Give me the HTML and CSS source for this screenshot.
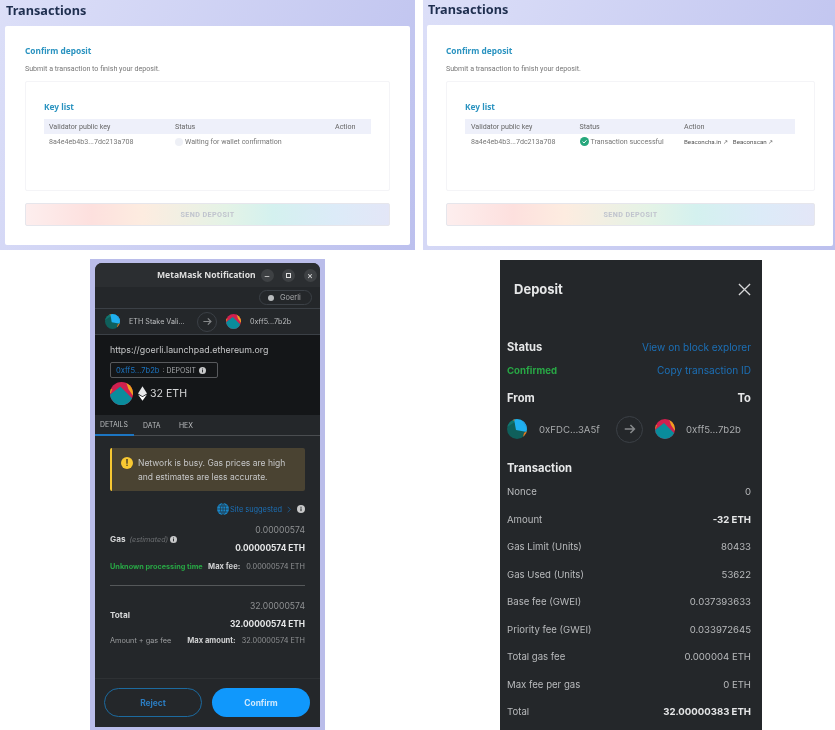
FILE: index.html
```html
<!DOCTYPE html>
<html lang="en">
<head>
  <meta charset="UTF-8">
  <title>Transactions</title>
  <link rel="stylesheet" href="styles.css">
</head>
<body>
  <svg class="defs" width="0" height="0">
    <symbol id="fox1" viewBox="0 0 20 20">
      <clipPath id="c1"><circle cx="10" cy="10" r="10"/></clipPath>
      <g clip-path="url(#c1)">
        <rect width="20" height="20" fill="#0f5f5b"/>
        <path d="M0 0H9L8 3L0 8Z" fill="#12756f"/>
        <path d="M7 0H16L20 6V13L9 11Z" fill="#1fb0f0"/>
        <path d="M14 0H20V10Z" fill="#2a9be0"/>
        <path d="M17 14L20 12V17L16 18Z" fill="#e8761c"/>
        <path d="M5 0H8L7 2Z" fill="#d8701c"/>
      </g>
    </symbol>
    <symbol id="fox2" viewBox="0 0 20 20">
      <clipPath id="c2"><circle cx="10" cy="10" r="10"/></clipPath>
      <g clip-path="url(#c2)">
        <rect width="20" height="20" fill="#d0204f"/>
        <path d="M14 0H20V12L16 6Z" fill="#f0a21e"/>
        <path d="M0 6H2L1 9L0 10Z" fill="#e88a1e"/>
        <path d="M0 11L9 4L20 15V20H0Z" fill="#0a8c9c"/>
      </g>
    </symbol>
    <symbol id="info" viewBox="0 0 12 12">
      <circle cx="6" cy="6" r="6" fill="currentColor"/>
      <rect x="5.2" y="5" width="1.6" height="4.2" fill="#24272a"/>
      <rect x="5.2" y="2.6" width="1.6" height="1.6" fill="#24272a"/>
    </symbol>
    <symbol id="arrow" viewBox="0 0 16 16">
      <path d="M2 8H13M8.5 3.5L13 8L8.5 12.5" fill="none" stroke="currentColor" stroke-width="1.8"/>
    </symbol>
  </svg>

  <div class="top-row">
    <section class="panel panel-wait">
      <h1>Transactions</h1>
      <div class="card">
        <h2>Confirm deposit</h2>
        <p class="sub">Submit a transaction to finish your deposit.</p>
        <div class="inner">
          <h3>Key list</h3>
          <div class="thead wait-cols">
            <span>Validator public key</span><span>Status</span><span>Action</span>
          </div>
          <div class="tbody wait-cols">
            <span>8a4e4eb4b3...7dc213a708</span>
            <span class="status"><i class="spinner"></i>Waiting for wallet confirmation</span>
          </div>
        </div>
        <div class="send">SEND DEPOSIT</div>
      </div>
    </section>

    <section class="panel panel-done">
      <h1>Transactions</h1>
      <div class="card">
        <h2>Confirm deposit</h2>
        <p class="sub">Submit a transaction to finish your deposit.</p>
        <div class="inner">
          <h3>Key list</h3>
          <div class="thead done-cols">
            <span>Validator public key</span><span>Status</span><span>Action</span>
          </div>
          <div class="tbody done-cols">
            <span>8a4e4eb4b3...7dc213a708</span>
            <span class="status">
              <svg class="check" viewBox="0 0 12 12"><circle cx="6" cy="6" r="6" fill="#26a77c"/><path d="M3.4 6.2L5.3 8L8.7 4.4" fill="none" stroke="#fff" stroke-width="1.3"/></svg>
              Transaction successful
            </span>
            <span class="links"><a>Beaconcha.in ↗</a><a>Beaconscan ↗</a></span>
          </div>
        </div>
        <div class="send">SEND DEPOSIT</div>
      </div>
    </section>
  </div>

  <div class="bottom-row">
    <section class="mm-frame">
      <div class="mm-window">
        <div class="mm-title">
          <span class="mm-title-text">MetaMask Notification</span>
          <span class="win-btn">–</span>
          <span class="win-btn win-sq"><i></i></span>
          <span class="win-btn">×</span>
        </div>
        <div class="mm-network">
          <span class="net-pill"><i class="net-dot"></i>Goerli</span>
        </div>
        <div class="mm-accounts">
          <svg class="av15"><use href="#fox1"/></svg>
          <span class="acc-from">ETH Stake Vali...</span>
          <span class="acc-arrow"><svg class="arrow-sm"><use href="#arrow"/></svg></span>
          <svg class="av15"><use href="#fox2"/></svg>
          <span class="acc-to">0xff5...7b2b</span>
        </div>
        <div class="mm-origin">
          <div class="origin-url">https://goerli.launchpad.ethereum.org</div>
          <div class="method"><span class="method-addr">0xff5...7b2b</span><span class="method-name">: DEPOSIT</span><svg class="info-sm"><use href="#info"/></svg></div>
          <div class="amount">
            <svg class="av23"><use href="#fox2"/></svg>
            <svg class="eth" viewBox="0 0 10 16"><path d="M5 0L10 8L5 11L0 8Z" fill="#e8e9ea"/><path d="M5 12L10 9L5 16L0 9Z" fill="#fff"/></svg>
            <span>32 ETH</span>
          </div>
        </div>
        <div class="mm-tabs">
          <span class="tab tab-on">DETAILS</span><span class="tab tab-data">DATA</span><span class="tab">HEX</span>
        </div>
        <div class="mm-body">
          <div class="alert">
            <span class="alert-icon">!</span>
            <p>Network is busy. Gas prices are high<br>and estimates are less accurate.</p>
          </div>
          <div class="site">
            <svg class="globe" viewBox="0 0 12 12"><circle cx="6" cy="6" r="6" fill="#1a87c8"/><path d="M0 6H12M6 0V12M1.5 3H10.5M1.5 9H10.5M6 0C2.5 3 2.5 9 6 12C9.5 9 9.5 3 6 0" fill="none" stroke="#24272a" stroke-width=".6"/></svg>
            <span>Site suggested</span>
            <svg class="chev" viewBox="0 0 6 10"><path d="M1 1L5 5L1 9" fill="none" stroke="#1c6fb5" stroke-width="1"/></svg>
            <svg class="info-sm"><use href="#info"/></svg>
          </div>
          <div class="fee-row fee-gas">
            <div class="fee-label"><b>Gas</b> <em>(estimated)</em> <svg class="info-sm"><use href="#info"/></svg></div>
            <div class="fee-vals"><div class="fee-light">0.00000574</div><div class="fee-bold">0.00000574 ETH</div></div>
          </div>
          <div class="fee-foot">
            <span class="green">Unknown processing time</span>
            <span><b>Max fee:</b><span class="max-val">0.00000574 ETH</span></span>
          </div>
          <hr class="fee-hr">
          <div class="fee-row">
            <div class="fee-label"><b>Total</b></div>
            <div class="fee-vals"><div class="fee-light">32.00000574</div><div class="fee-bold">32.00000574 ETH</div></div>
          </div>
          <div class="fee-foot fee-foot-total">
            <span class="muted">Amount + gas fee</span>
            <span><b>Max amount:</b><span class="max-val">32.00000574 ETH</span></span>
          </div>
        </div>
        <div class="mm-footer">
          <span class="btn btn-reject">Reject</span>
          <span class="btn btn-confirm">Confirm</span>
        </div>
      </div>
    </section>

    <section class="deposit">
      <div class="dep-head">
        <span>Deposit</span>
        <svg class="close" viewBox="0 0 14 14"><path d="M1 1L13 13M13 1L1 13" stroke="#d6d7d8" stroke-width="1.4"/></svg>
      </div>
      <div class="dep-line dep-status"><b>Status</b><a>View on block explorer</a></div>
      <div class="dep-line dep-conf"><span class="green">Confirmed</span><a>Copy transaction ID</a></div>
      <div class="dep-line dep-from"><b>From</b><b>To</b></div>
      <div class="dep-accounts">
        <svg class="av20"><use href="#fox1"/></svg>
        <span class="dep-addr1">0xFDC...3A5f</span>
        <span class="dep-arrow"><svg class="arrow-md"><use href="#arrow"/></svg></span>
        <svg class="av20"><use href="#fox2"/></svg>
        <span class="dep-addr2">0xff5...7b2b</span>
      </div>
      <div class="dep-tx"><b>Transaction</b></div>
      <div class="tx-row"><span>Nonce</span><span>0</span></div>
      <div class="tx-row"><span>Amount</span><b>-32 ETH</b></div>
      <div class="tx-row"><span>Gas Limit (Units)</span><span>80433</span></div>
      <div class="tx-row"><span>Gas Used (Units)</span><span>53622</span></div>
      <div class="tx-row"><span>Base fee (GWEI)</span><span>0.037393633</span></div>
      <div class="tx-row"><span>Priority fee (GWEI)</span><span>0.033972645</span></div>
      <div class="tx-row"><span>Total gas fee</span><span>0.000004 ETH</span></div>
      <div class="tx-row"><span>Max fee per gas</span><span>0 ETH</span></div>
      <div class="tx-row"><span>Total</span><b>32.00000383 ETH</b></div>
    </section>
  </div>
</body>
</html>
```

FILE: styles.css
```css
* {
  box-sizing: border-box;
}

body {
  margin: 0;
  width: 835px;
  height: 730px;
  overflow: hidden;
  background-color: #fff;
  font-family: 'Roboto', sans-serif;
}

.defs {
  position: absolute;
}

.top-row {
  display: flex;
  justify-content: space-between;
  height: 250px;
}

.panel {
  height: 250px;
  background: linear-gradient(115deg, #dcdff8, #bcc0ee);
  filter: blur(0.35px);
}

.panel-wait {
  width: 415px;
  padding: 0 5px;
}

.panel-done {
  width: 412px;
  padding: 0 2px 0 4px;
}

.panel h1 {
  margin: 0;
  height: 26px;
  padding: 1px 0 0 1px;
  font-family: 'Noto Sans', sans-serif;
  font-size: 12.7px;
  font-weight: 700;
  line-height: 18px;
  color: #1f2f4f;
}

.panel-done h1 {
  height: 25px;
  padding-top: 0;
}

.card {
  height: 219px;
  padding: 19px 20px 0;
  background-color: #fff;
  border-radius: 2px;
}

.panel-done .card {
  height: 221px;
  padding: 20px 18px 0 19px;
}

.card h2,
.card h3 {
  margin: 0;
  font-family: 'Noto Sans', sans-serif;
  font-size: 8.3px;
  font-weight: 700;
  line-height: 12px;
  color: #2a93c0;
}

.sub {
  margin: 7px 0 0;
  font-size: 7.1px;
  line-height: 10px;
  color: #777;
}

.inner {
  height: 110px;
  margin-top: 7px;
  padding: 19px 18px 0;
  border: 1px solid #f4f4f7;
  border-radius: 2px;
}

.panel-done .inner {
  padding-right: 19px;
}

.thead {
  display: grid;
  height: 15px;
  margin-top: 6px;
  align-items: center;
  background-color: #eef0fa;
  font-size: 7.1px;
  color: #666;
}

.tbody {
  display: grid;
  height: 15px;
  align-items: center;
  font-size: 7.1px;
  color: #777;
}

.wait-cols {
  grid-template-columns: 126px 160px 1fr;
  padding-left: 5px;
}

.done-cols {
  grid-template-columns: 108.5px 104.5px 1fr;
  padding-left: 6px;
}

.status {
  display: flex;
  align-items: center;
}

.spinner {
  width: 8px;
  height: 8px;
  margin-right: 2px;
  border-radius: 50%;
  background-color: #eef0f6;
}

.check {
  width: 9px;
  height: 9px;
  margin-right: 2px;
}

.links {
  display: flex;
  gap: 5px;
  font-size: 6.2px;
  color: #555;
}

.send {
  display: flex;
  height: 23px;
  margin-top: 12px;
  align-items: center;
  justify-content: center;
  border: 1px solid #e6e6ec;
  border-radius: 2px;
  background: linear-gradient(90deg, #fdeeee, #fde0de 18%, #fdece0 32%, #e4f3e6 55%, #d4f1ef 68%, #dcebf8 85%, #e3e6f7);
  font-size: 7.2px;
  font-weight: 700;
  letter-spacing: 0.4px;
  color: #c0c4ce;
}

.bottom-row {
  display: flex;
  height: 480px;
}

.mm-frame {
  width: 235px;
  height: 471px;
  margin: 9px 0 0 90px;
  padding: 4px 5px 3px;
  background-color: #babdea;
  filter: blur(0.35px);
}

.mm-window {
  height: 100%;
  overflow: hidden;
  border-radius: 7px 7px 0 0;
  background-color: #24272a;
  font-family: 'Inter', sans-serif;
  color: #d6d7d8;
}

.mm-title {
  display: flex;
  height: 24px;
  align-items: center;
  padding-left: 62px;
  gap: 8.5px;
  background-color: #2b2e31;
}

.mm-title-text {
  width: 95px;
  font-family: 'Noto Sans', sans-serif;
  font-size: 8.6px;
  font-weight: 700;
  white-space: nowrap;
  color: #dfdfdf;
}

.win-btn {
  display: flex;
  width: 13px;
  height: 13px;
  align-items: center;
  justify-content: center;
  border-radius: 50%;
  background-color: #3e4144;
  font-size: 9px;
  line-height: 1;
  color: #e0e0e0;
}

.win-sq i {
  width: 5px;
  height: 5px;
  border: 1px solid #e0e0e0;
}

.mm-network {
  display: flex;
  height: 21px;
  justify-content: flex-end;
  align-items: center;
  padding-right: 8px;
}

.net-pill {
  display: flex;
  width: 53px;
  height: 15px;
  align-items: center;
  padding-left: 8px;
  gap: 6px;
  border: 1px solid #3b4046;
  border-radius: 8px;
  font-size: 7.4px;
  color: #a8aaac;
}

.net-dot {
  width: 6px;
  height: 6px;
  border-radius: 50%;
  background-color: #b8bbbd;
}

.mm-accounts {
  display: flex;
  height: 27px;
  align-items: center;
  padding-left: 10px;
  border-top: 1px solid #3b4046;
  border-bottom: 1px solid #3b4046;
  font-size: 7.2px;
  color: #bbbdbf;
}

.av15 {
  width: 15px;
  height: 15px;
}

.acc-from {
  width: 68px;
  margin-left: 9px;
  white-space: nowrap;
}

.acc-arrow {
  display: flex;
  width: 20px;
  height: 20px;
  margin-right: 9px;
  align-items: center;
  justify-content: center;
  border: 1px solid #3b4046;
  border-radius: 50%;
  color: #85888a;
}

.arrow-sm {
  width: 11px;
  height: 11px;
}

.acc-to {
  margin-left: 9px;
}

.mm-origin {
  height: 80px;
  padding: 8px 15px 0;
  background-color: #141618;
}

.origin-url {
  font-size: 8.85px;
  line-height: 14px;
  white-space: nowrap;
  color: #c5c6c7;
}

.method {
  display: flex;
  width: 108px;
  height: 16px;
  margin-top: 5px;
  align-items: center;
  padding-left: 5px;
  border: 1px solid #585a5d;
  border-radius: 2px;
}

.method-addr {
  font-size: 7.6px;
  color: #1c75c2;
}

.method-name {
  margin: 0 3px 0 3px;
  font-size: 6.9px;
  white-space: nowrap;
  color: #a8aaac;
}

.info-sm {
  flex-shrink: 0;
  width: 7px;
  height: 7px;
  color: #c8c9ca;
}

.amount {
  display: flex;
  height: 23px;
  margin-top: 4px;
  align-items: center;
  font-size: 10.6px;
  color: #d6d7d8;
}

.av23 {
  width: 23px;
  height: 23px;
}

.eth {
  width: 9px;
  height: 15px;
  margin: 0 3px 0 5px;
}

.mm-tabs {
  display: flex;
  height: 21px;
  align-items: center;
  border-bottom: 1px solid #4a4d50;
  font-size: 6.9px;
  color: #bbbdbf;
}

.tab {
  display: flex;
  height: 21px;
  align-items: center;
}

.tab-on {
  width: 39px;
  padding-left: 5px;
  border-bottom: 2px solid #1c75c2;
}

.tab-data {
  width: 36px;
  margin-left: 9px;
}

.mm-body {
  height: 242px;
  padding: 12px 15px 0;
}

.alert {
  display: flex;
  height: 43px;
  align-items: center;
  padding-left: 9px;
  gap: 5px;
  border-left: 2px solid #f8c832;
  border-radius: 2px;
  background-color: #4a4332;
}

.alert p {
  margin: 0;
  font-size: 8.5px;
  line-height: 14px;
  white-space: nowrap;
  color: #c5c6c7;
}

.alert-icon {
  display: flex;
  flex-shrink: 0;
  width: 12px;
  height: 12px;
  margin-top: -14px;
  align-items: center;
  justify-content: center;
  border-radius: 50%;
  background-color: #f8c832;
  font-size: 9px;
  font-weight: 700;
  color: #3c3526;
}

.site {
  display: flex;
  height: 12px;
  margin-top: 12px;
  justify-content: flex-end;
  align-items: center;
  font-size: 7.4px;
  color: #1c6fb5;
}

.globe {
  width: 12px;
  height: 12px;
  margin-right: 1px;
}

.chev {
  width: 4px;
  height: 7px;
  margin: 0 6px 0 5px;
}

.site .info-sm {
  width: 8px;
  height: 8px;
}

.fee-row {
  display: flex;
  justify-content: space-between;
  align-items: center;
  height: 36px;
}

.fee-gas {
  margin-top: 6px;
}

.fee-label {
  display: flex;
  align-items: center;
  gap: 2px;
  font-size: 8.2px;
  color: #d6d7d8;
}

.fee-label b {
  font-weight: 700;
}

.fee-label em {
  margin-left: 2px;
  font-size: 7.2px;
  color: #6c6f72;
}

.fee-vals {
  text-align: right;
}

.fee-light {
  font-size: 8.6px;
  line-height: 18px;
  color: #8f9193;
}

.fee-bold {
  font-size: 8.3px;
  font-weight: 700;
  line-height: 18px;
  color: #e6e7e8;
}

.fee-foot {
  display: flex;
  justify-content: space-between;
  align-items: center;
  height: 14px;
  margin-top: 2px;
  font-size: 7.3px;
  color: #d0d1d2;
}

.fee-foot-total {
  margin-top: 0;
}

.fee-foot b {
  font-size: 7.6px;
}

.green {
  font-weight: 700;
  color: #28a745;
}

.muted {
  color: #9a9c9e;
}

.max-val {
  margin-left: 6px;
  color: #8f9193;
}

.fee-hr {
  height: 1px;
  margin: 12px 0 11px;
  border: 0;
  background-color: #55585a;
}

.mm-footer {
  display: flex;
  height: 50px;
  padding: 9px 10px 0 9px;
  gap: 10px;
  border-top: 1px solid #2e3134;
}

.btn {
  display: flex;
  width: 98px;
  height: 29px;
  align-items: center;
  justify-content: center;
  border-radius: 15px;
  font-size: 8.4px;
  font-weight: 700;
}

.btn-reject {
  border: 1px solid #1c6a9f;
  color: #2b7cc0;
}

.btn-confirm {
  background-color: #1098fc;
  color: #cfe9fd;
}

.deposit {
  width: 262px;
  height: 470px;
  margin: 10px 0 0 175px;
  padding: 0 11px 0 7px;
  background-color: #24272a;
  font-family: 'Inter', sans-serif;
  font-size: 9.6px;
  color: #b8babc;
  filter: blur(0.35px);
}

.dep-head {
  display: flex;
  height: 58px;
  justify-content: space-between;
  align-items: center;
  padding-left: 7px;
  font-size: 13px;
  font-weight: 700;
  color: #e6e7e8;
}

.close {
  width: 13px;
  height: 13px;
}

.dep-line {
  display: flex;
  justify-content: space-between;
  align-items: center;
}

.dep-line b,
.dep-tx b {
  font-size: 11.2px;
  font-weight: 700;
  color: #e6e7e8;
}

.dep-line a {
  font-size: 10.1px;
  color: #1c6fb5;
}

.dep-status {
  height: 14px;
  margin-top: 22px;
}

.dep-conf {
  height: 14px;
  margin-top: 9px;
}

.dep-from {
  height: 14px;
  margin-top: 14px;
}

.dep-accounts {
  display: flex;
  height: 26px;
  margin-top: 11px;
  align-items: center;
  color: #a8aaac;
}

.av20 {
  width: 20px;
  height: 20px;
}

.dep-addr1 {
  width: 77px;
  margin-left: 12px;
  white-space: nowrap;
}

.dep-arrow {
  display: flex;
  width: 27px;
  height: 27px;
  margin-right: 12px;
  align-items: center;
  justify-content: center;
  border: 1px solid #3b4046;
  border-radius: 50%;
  color: #85888a;
}

.arrow-md {
  width: 14px;
  height: 14px;
}

.dep-addr2 {
  margin-left: 11px;
}

.dep-tx {
  height: 14px;
  margin-top: 19px;
  margin-bottom: 3px;
}

.tx-row {
  display: flex;
  height: 27.5px;
  justify-content: space-between;
  align-items: center;
}

.tx-row b {
  font-weight: 700;
  color: #e6e7e8;
}
```
